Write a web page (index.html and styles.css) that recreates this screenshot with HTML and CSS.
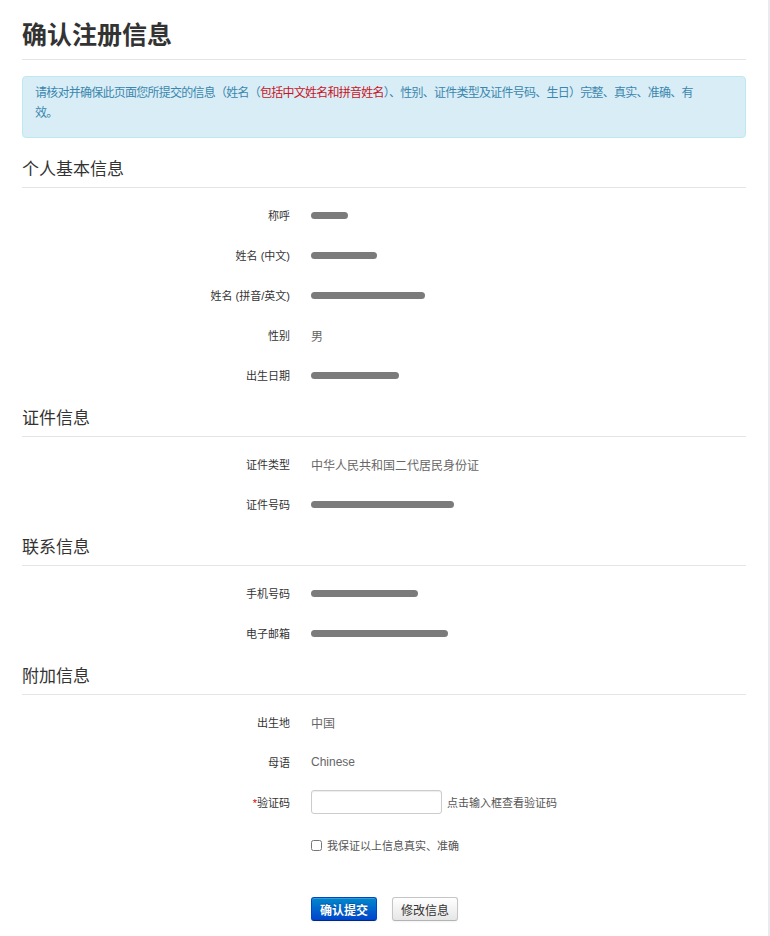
FILE: index.html
```html
<!DOCTYPE html>
<html lang="zh-CN">
<head>
<meta charset="utf-8">
<title>确认注册信息</title>
<link rel="stylesheet" href="styles.css">
</head>
<body>
<div class="page">
  <div class="container">
    <div class="page-header">
      <h1>确认注册信息</h1>
    </div>
    <div class="alert">请核对并确保此页面您所提交的信息（姓名（<span class="hl">包括中文姓名和拼音姓名</span>）、性别、证件类型及证件号码、生日）完整、真实、准确、有效。</div>

    <h2 class="legend">个人基本信息</h2>
    <div class="row"><div class="label">称呼</div><div class="value"><span class="blur" style="width:37px"></span></div></div>
    <div class="row"><div class="label">姓名 (中文)</div><div class="value"><span class="blur" style="width:66px"></span></div></div>
    <div class="row"><div class="label">姓名 (拼音/英文)</div><div class="value"><span class="blur" style="width:114px"></span></div></div>
    <div class="row"><div class="label">性别</div><div class="value">男</div></div>
    <div class="row"><div class="label">出生日期</div><div class="value"><span class="blur" style="width:88px"></span></div></div>

    <h2 class="legend">证件信息</h2>
    <div class="row"><div class="label">证件类型</div><div class="value">中华人民共和国二代居民身份证</div></div>
    <div class="row"><div class="label">证件号码</div><div class="value"><span class="blur" style="width:143px"></span></div></div>

    <h2 class="legend">联系信息</h2>
    <div class="row"><div class="label">手机号码</div><div class="value"><span class="blur" style="width:107px"></span></div></div>
    <div class="row"><div class="label">电子邮箱</div><div class="value"><span class="blur" style="width:137px"></span></div></div>

    <h2 class="legend">附加信息</h2>
    <div class="row"><div class="label">出生地</div><div class="value">中国</div></div>
    <div class="row"><div class="label">母语</div><div class="value">Chinese</div></div>
    <div class="row"><div class="label"><span class="req">*</span>验证码</div><div class="value"><input class="captcha" type="text"><span class="help">点击输入框查看验证码</span></div></div>
    <div class="row check-row"><div class="label"></div><div class="value"><label class="check"><input type="checkbox"><span>我保证以上信息真实、准确</span></label></div></div>
    <div class="actions">
      <button class="btn btn-primary" type="button">确认提交</button>
      <button class="btn" type="button">修改信息</button>
    </div>
  </div>
</div>
</body>
</html>
```

FILE: styles.css
```css
html, body {
  margin: 0;
  padding: 0;
  background: #fff;
}
body {
  font-family: "Liberation Sans", "Noto Sans CJK SC", sans-serif;
  color: #333;
}
.page {
  width: 768px;
  height: 936px;
  border-right: 2px solid #e9ecee;
  overflow: hidden;
}
.container {
  padding-left: 22px;
  width: 724px;
}
.page-header {
  padding-top: 15px;
  padding-bottom: 4px;
  border-bottom: 1px solid #e5e5e5;
}
.page-header h1 {
  margin: 0;
  font-size: 25px;
  line-height: 40px;
  font-weight: bold;
  color: #333;
}
.alert {
  margin-top: 16px;
  height: 62px;
  box-sizing: border-box;
  padding: 6px 44px 14px 12px;
  background: #d9edf7;
  border: 1px solid #bce8f1;
  border-radius: 4px;
  color: #3a87ad;
  font-size: 12px;
  line-height: 20px;
  letter-spacing: -0.75px;
}
.alert .hl {
  color: #c8141e;
}
.legend {
  margin: 7px 0 7px 0;
  height: 34px;
  line-height: 34px;
  font-size: 17px;
  font-weight: normal;
  color: #333;
  border-bottom: 1px solid #e5e5e5;
}
.alert + .legend {
  margin-top: 15px;
}
.row {
  display: flex;
  align-items: center;
  height: 40px;
}
.label {
  width: 268px;
  text-align: right;
  font-size: 11px;
  color: #333;
}
.value {
  margin-left: 21px;
  display: flex;
  align-items: center;
  font-size: 12px;
  color: #666;
}
.blur {
  display: inline-block;
  height: 7px;
  border-radius: 4px;
  background: #7b7b7b;
  filter: blur(0.4px);
}
.req {
  color: #d40000;
  font-size: 11px;
}
.captcha {
  box-sizing: border-box;
  width: 131px;
  height: 24px;
  margin: 0;
  padding: 2px 5px;
  border: 1px solid #ccc;
  border-radius: 3px;
  box-shadow: inset 0 1px 1px rgba(0,0,0,0.075);
  font-size: 12px;
}
.help {
  margin-left: 5px;
  font-size: 11px;
  color: #555;
}
.check-row {
  margin-top: 3px;
}
.check {
  display: flex;
  align-items: center;
  font-size: 11px;
  color: #555;
}
.check input {
  margin: 0 5px 0 0;
  width: 11px;
  height: 11px;
}
.actions {
  margin-top: 32px;
  padding-left: 289px;
  display: flex;
  gap: 15px;
}
.btn {
  box-sizing: border-box;
  height: 24px;
  width: 66px;
  padding: 0;
  margin: 0;
  font-family: "Liberation Sans", "Noto Sans CJK SC", sans-serif;
  font-size: 12px;
  color: #333;
  border: 1px solid #c5c5c5;
  border-bottom-color: #b3b3b3;
  border-radius: 3px;
  background: linear-gradient(#ffffff, #e6e6e6);
  box-shadow: inset 0 1px 0 rgba(255,255,255,0.2), 0 1px 2px rgba(0,0,0,0.05);
}
.btn-primary {
  color: #fff;
  font-weight: bold;
  border-color: #0044cc #0044cc #002a80;
  background: linear-gradient(#0088cc, #0044cc);
  text-shadow: 0 -1px 0 rgba(0,0,0,0.25);
}
```
